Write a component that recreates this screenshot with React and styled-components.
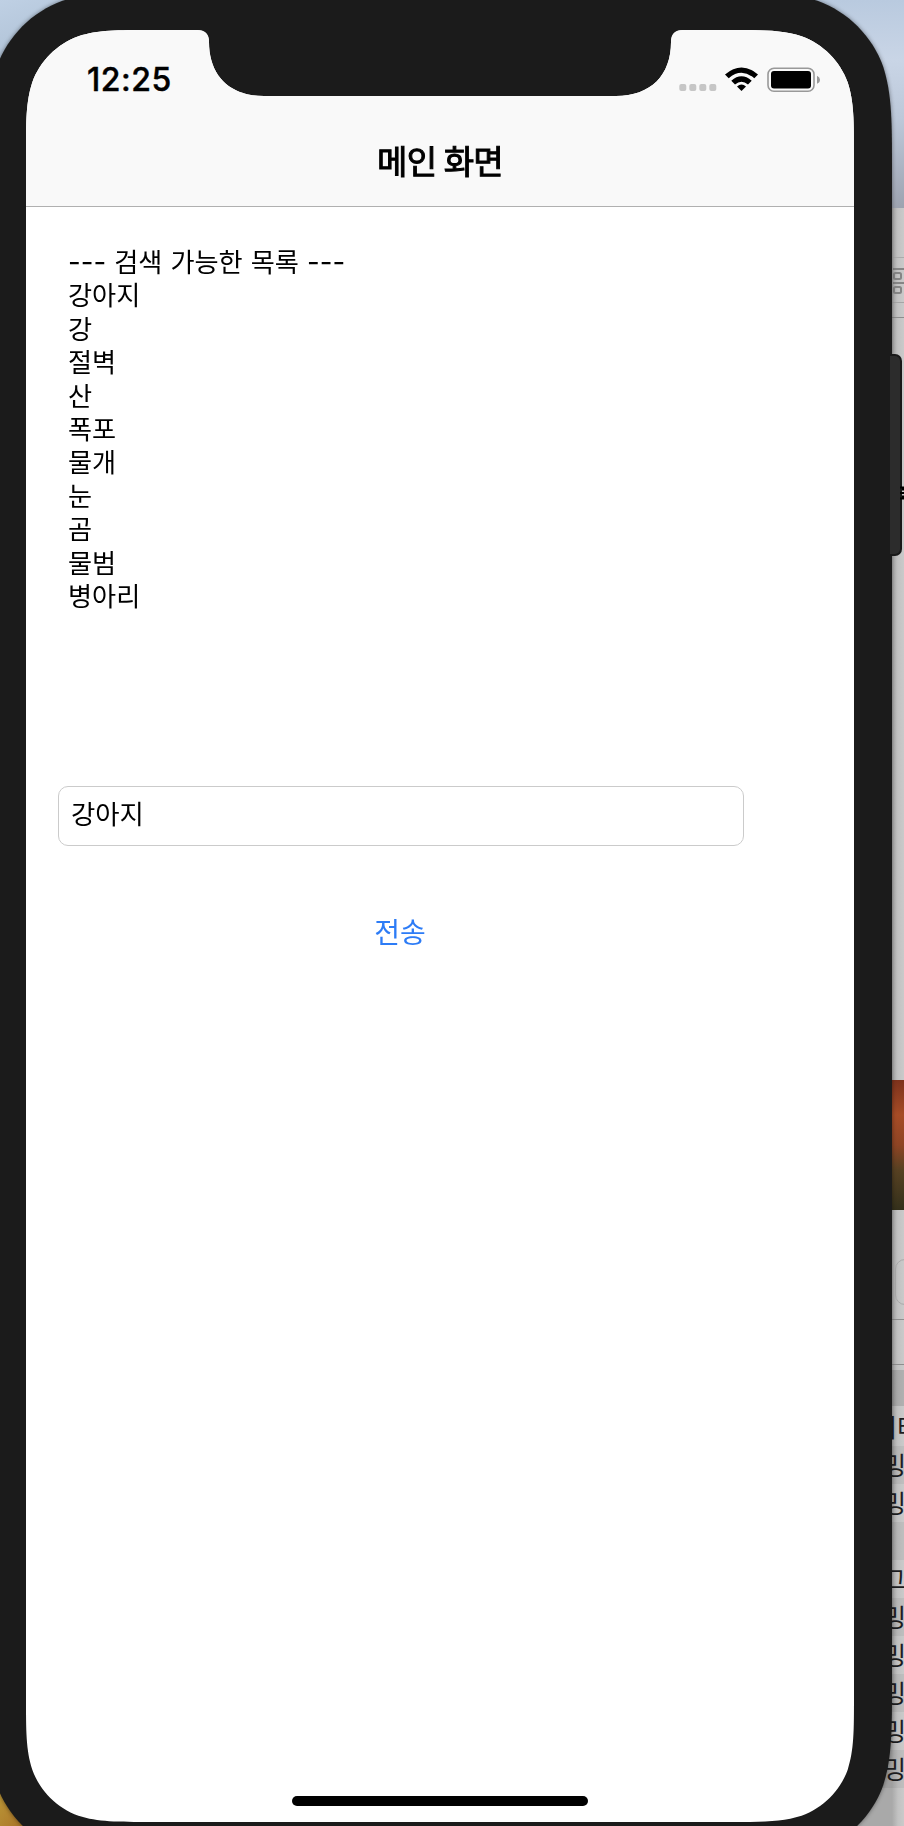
import React from "react";
import styled, { createGlobalStyle, css } from "styled-components";

const GlobalStyle = createGlobalStyle`
  * { box-sizing: border-box; }
  html, body { margin: 0; padding: 0; overflow: hidden; }
  body { font-family: Inter, "Noto Sans CJK KR", sans-serif; }
`;

const korean = css`
  font-family: "Noto Sans CJK KR", sans-serif;
`;

const Desktop = styled.div`
  position: relative;
  width: 904px;
  height: 1826px;
  overflow: hidden;
  display: flex;
  justify-content: space-between;
  background: linear-gradient(180deg, #b9cadf 0, #c9d5e6 60px, #bcc8d9 120px, #9da3b0 208px);
`;

const Wallpaper = styled.div`
  width: 70px;
  display: flex;
  flex-direction: column;
  justify-content: space-between;
`;

const Sky = styled.div`
  height: 70px;
  background: linear-gradient(160deg, #bfd0e4 0%, #b4c6da 50%, #8795a6 100%);
`;

const Meadow = styled.div`
  height: 70px;
  background: linear-gradient(120deg, #c2a63d 0%, #ad7a2b 50%, #8a5d25 100%);
`;

const BackWindow = styled.div`
  width: 54px;
  margin-top: 208px;
  height: 1618px;
  overflow: hidden;
  background: linear-gradient(90deg, #a9a9a9 0, #a9a9a9 42px, #c2c2c2 48px, #cacaca 54px);
  display: flex;
  flex-direction: column;
`;

const Band = styled.div`
  flex: none;
  height: ${(p) => p.$h}px;
  border-bottom: ${(p) => (p.$line ? `1px solid ${p.$line}` : "none")};
  background: ${(p) => p.$bg || "transparent"};
`;

const TabBand = styled(Band)`
  padding: 9px 0 0 43px;
`;

const TabIcon = styled.svg`
  display: block;
  width: 11px;
  height: 27px;
`;

const Photo = styled.div`
  flex: none;
  height: 130px;
  background: linear-gradient(180deg, #7d321c 0, #a64c26 35px, #8e4424 65px, #574122 90px, #34301b 130px);
`;

const FieldEdge = styled.div`
  flex: none;
  width: 60px;
  height: 46px;
  margin: 49px 0 14px 45px;
  border: 1px solid #a9a9a9;
  border-radius: 10px;
`;

const Row = styled.div`
  ${korean}
  flex: none;
  height: 38px;
  line-height: 36px;
  display: flex;
  justify-content: flex-end;
  font-size: 25px;
  color: #1c1c1e;
  white-space: nowrap;
  background: ${(p) => (p.$dark ? "rgba(0,0,0,0.055)" : "transparent")};
`;

const RowText = styled.span`
  margin-right: ${(p) => p.$shift || 0}px;
`;

const PhoneShadow = styled.div`
  position: absolute;
  left: -12px;
  top: -8px;
  filter: drop-shadow(0 0 2px rgba(0, 0, 0, 0.45));
`;

const Phone = styled.div`
  width: 904px;
  height: 1868px;
  padding: 38px;
  background: #1b1b1b;
  clip-path: path("${(p) => p.$shape}");
`;

const SideButton = styled.div`
  position: absolute;
  left: 890px;
  top: 354px;
  width: 12px;
  height: 202px;
  border: 2px solid #191919;
  border-left: none;
  border-radius: 0 7px 7px 0;
  background: #2c2c2c;
`;

const Badge = styled.svg`
  position: absolute;
  left: 900px;
  top: 486px;
  width: 4px;
  height: 14px;
`;

const Screen = styled.div`
  width: 828px;
  height: 1792px;
  background: #fff;
  clip-path: path("${(p) => p.$shape}");
  display: flex;
  flex-direction: column;
`;

const Header = styled.header`
  height: 177px;
  background: #f9f9f9;
  border-bottom: 1px solid #b0b0b0;
  display: flex;
  flex-direction: column;
`;

const StatusBar = styled.div`
  height: 88px;
  padding: 12px 33px 0 61px;
  display: flex;
  justify-content: space-between;
  align-items: center;
`;

const Clock = styled.div`
  font: 500 32px/38px Inter, sans-serif;
  letter-spacing: 0.5px;
  -webkit-text-stroke: 0.4px #000;
  color: #000;
`;

const StatusIcons = styled.svg`
  display: block;
  width: 142px;
  height: 26px;
`;

const Title = styled.h1`
  ${korean}
  margin: 0;
  height: 84px;
  line-height: 84px;
  text-align: center;
  font-size: 33px;
  font-weight: 400;
  letter-spacing: -0.8px;
  word-spacing: 1px;
  -webkit-text-stroke: 1px #000;
  color: #000;
`;

const Content = styled.main`
  flex: 1;
  display: flex;
  flex-direction: column;
  align-items: flex-start;
  padding: 38px 32px 0;
`;

const WordList = styled.div`
  ${korean}
  height: 541px;
  padding-left: 10px;
  font-size: 26.2px;
  line-height: 33.4px;
  color: #000;
`;

const Heading = styled.div`
  height: 33.4px;
  white-space: pre;
  word-spacing: 2.2px;
`;

const Dashes = styled.span`
  font-family: Inter, sans-serif;
  font-size: 27.6px;
  line-height: 1;
`;

const Field = styled.input`
  ${korean}
  width: 686px;
  height: 60px;
  padding: 0 13px 7px 12px;
  border: 1px solid #cbcbcb;
  border-radius: 10px;
  background: #fff;
  outline: none;
  font-size: 26.4px;
  color: #000;
`;

const SendButton = styled.button`
  ${korean}
  width: 684px;
  height: 60px;
  margin-top: 55px;
  padding: 0;
  border: 0;
  background: none;
  font-size: 28px;
  color: #2d7cf6;
`;

const HomeBar = styled.div`
  width: 296px;
  height: 10px;
  margin: 0 auto 16px;
  border-radius: 5px;
  background: #000;
`;

// Rounded rectangle with continuous-curvature corners.
function squircle(w, h, r, notch = "") {
  const a = 1.52866 * r, b = 1.08849 * r, c = 0.86841 * r;
  const d = 0.63149 * r, e = 0.07491 * r, f = 0.37282 * r, g = 0.16906 * r;
  return (
    `M${a} 0 ${notch} L${w - a} 0 C${w - b} 0 ${w - c} 0 ${w - d} ${e} ` +
    `C${w - f} ${g} ${w - g} ${f} ${w - e} ${d} C${w} ${c} ${w} ${b} ${w} ${a} ` +
    `L${w} ${h - a} C${w} ${h - b} ${w} ${h - c} ${w - e} ${h - d} ` +
    `C${w - g} ${h - f} ${w - f} ${h - g} ${w - d} ${h - e} C${w - c} ${h} ${w - b} ${h} ${w - a} ${h} ` +
    `L${a} ${h} C${b} ${h} ${c} ${h} ${d} ${h - e} C${f} ${h - g} ${g} ${h - f} ${e} ${h - d} ` +
    `C0 ${h - c} 0 ${h - b} 0 ${h - a} L0 ${a} C0 ${b} 0 ${c} ${e} ${d} ` +
    `C${g} ${f} ${f} ${g} ${d} ${e} C${c} 0 ${b} 0 ${a} 0Z`
  );
}

const NOTCH =
  "L171 0 C179 0 183 4 183 12 C183 45 203 66 238 66 L590 66 C625 66 645 45 645 12 C645 4 649 0 657 0";
const PHONE_SHAPE = squircle(904, 1868, 118);
const SCREEN_SHAPE = squircle(828, 1792, 83, NOTCH);

const words = ["강아지", "강", "절벽", "산", "폭포", "물개", "눈", "곰", "물범", "병아리"];
const rows = [
  { text: "이터", shift: -16 },
  { text: "밍", shift: -2 },
  { text: "밍", shift: -2 },
  { text: "" },
  { text: "그", shift: -2 },
  { text: "밍", shift: -2 },
  { text: "밍", shift: -2 },
  { text: "밍", shift: -2 },
  { text: "밍", shift: -2 },
  { text: "밍", shift: -2 },
];

function Icons() {
  return (
    <StatusIcons viewBox="0 0 142 26">
      {[0, 10, 20, 30].map((x) => (
        <rect key={x} x={x + 0.3} y="17" width="7" height="7" rx="2" fill="#c6c6c6" />
      ))}
      <path d="M46 7.5 Q62.5 -6.5 79 7.5 L75.3 11.2 Q62.5 0.5 49.7 11.2Z" />
      <path d="M52.3 13.7 Q62.5 5 72.7 13.7 L69 17.4 Q62.5 12 56 17.4Z" />
      <path d="M58 19.4 Q62.5 15.8 67 19.4 L62.5 24Z" />
      <rect x="89" y="1.2" width="46" height="23" rx="6" fill="none" stroke="#999" strokeWidth="1.6" />
      <rect x="92" y="4" width="40" height="17.4" rx="3" />
      <path d="M138 8.7 Q141 10 141 12.7 Q141 15.5 138 16.8Z" fill="#999" />
    </StatusIcons>
  );
}

export default function App() {
  return (
    <>
      <GlobalStyle />
      <Desktop>
        <Wallpaper>
          <Sky />
          <Meadow />
        </Wallpaper>
        <BackWindow>
          <Band $h={50} $line="#ababab" />
          <TabBand $h={45} $line="#a5a5a5">
            <TabIcon viewBox="0 0 11 27" fill="none" stroke="#858585" strokeWidth="2">
              <path d="M0 2H11M0 16H11" />
              <rect x="1" y="6" width="7" height="6" rx="1.5" />
              <rect x="1" y="20" width="7" height="6" rx="1.5" />
            </TabIcon>
          </TabBand>
          <Band $h={15} $line="#8d8d8d" />
          <Band $h={762} />
          <Photo />
          <FieldEdge />
          <Band $h={1} $bg="#8e8e8e" />
          <Band $h={45} $line="#8e8e8e" />
          <Band $h={5} />
          <Band $h={36} $bg="rgba(0,0,0,0.12)" />
          <Band $h={2} />
          {rows.map((row, i) => (
            <Row key={i} $dark={i % 2 === 1}>
              <RowText $shift={row.shift}>{row.text}</RowText>
            </Row>
          ))}
        </BackWindow>
        <PhoneShadow>
          <Phone $shape={PHONE_SHAPE}>
            <Screen $shape={SCREEN_SHAPE}>
              <Header>
                <StatusBar>
                  <Clock>12:25</Clock>
                  <Icons />
                </StatusBar>
                <Title>메인 화면</Title>
              </Header>
              <Content>
                <WordList>
                  <Heading>
                    <Dashes>---</Dashes> 검색 가능한 목록 <Dashes>---</Dashes>
                  </Heading>
                  {words.map((w) => (
                    <div key={w}>{w}</div>
                  ))}
                </WordList>
                <Field defaultValue="강아지" />
                <SendButton>전송</SendButton>
              </Content>
              <HomeBar />
            </Screen>
          </Phone>
        </PhoneShadow>
        <SideButton />
        <Badge viewBox="0 0 4 14" fill="none" stroke="#000" strokeWidth="2">
          <path d="M0 1.5H3V4.5M0 7H4M0 12.5H3V9.5" />
        </Badge>
      </Desktop>
    </>
  );
}
